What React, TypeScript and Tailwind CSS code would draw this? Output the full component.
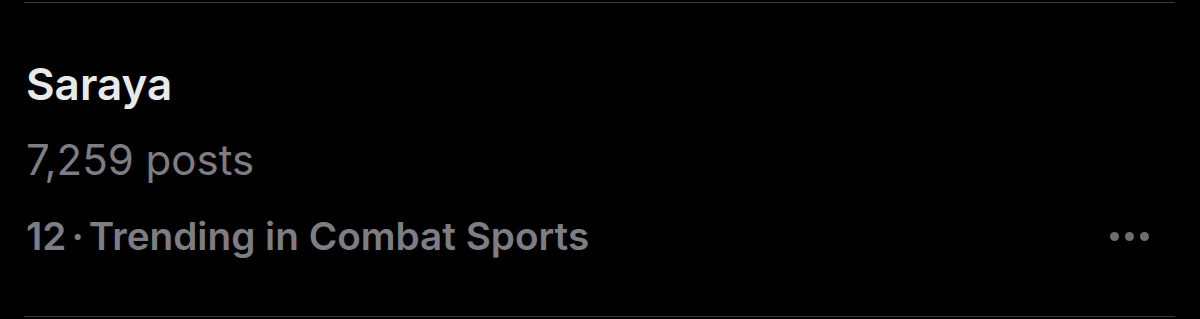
const TrendItem = () => {
  return (
    <div className="flex flex-col">
      <div className="text-[44px] leading-[52px] font-semibold text-[#e7e9ea]">Saraya</div>
      <div className="mt-[25px] text-[42px] leading-[50px] text-[#7d7d83]">7,259 posts</div>
      <div className="mt-[28px] flex items-center justify-between">
        <span className="flex text-[38.7px] leading-[46px] font-semibold text-[#7d7d83]">
          <span>12</span>
          <span className="mx-[5px]">·</span>
          <span>Trending in Combat Sports</span>
        </span>
        <span className="flex items-center gap-[6px] mr-[51px]">
          <span className="w-[9px] h-[9px] rounded-full bg-[#6e6e72]" />
          <span className="w-[9px] h-[9px] rounded-full bg-[#6e6e72]" />
          <span className="w-[9px] h-[9px] rounded-full bg-[#6e6e72]" />
        </span>
      </div>
    </div>
  );
};

export default function App() {
  return (
    <div
      className="w-[1200px] h-[319px] bg-black flex flex-col"
      style={{ fontFamily: 'Inter, "Noto Sans", sans-serif' }}
    >
      <div className="mt-[2px] ml-[24px] mr-[25px] h-px bg-[#3a3a3c]" />
      <div className="pl-[26px] pt-[55px] flex-1">
        <TrendItem />
      </div>
      <div className="mb-[2px] ml-[24px] mr-[25px] h-px bg-[#3a3a3c]" />
    </div>
  );
}
